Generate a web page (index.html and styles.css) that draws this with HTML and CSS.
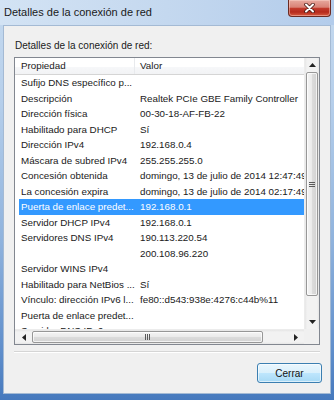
FILE: index.html
```html
<!DOCTYPE html>
<html lang="es">
<head>
<meta charset="utf-8">
<title>Detalles de la conexión de red</title>
<link rel="stylesheet" href="styles.css">
</head>
<body>
<div class="window">
  <div class="titlebar">
    <span class="title">Detalles de la conexión de red</span>
    <div class="close">
      <svg width="11" height="10" viewBox="0 0 11 10">
        <path d="M2 1.5 L9 8.5 M9 1.5 L2 8.5" stroke="#4a1a14" stroke-width="3.6" stroke-linecap="round"/>
        <path d="M2 1.5 L9 8.5 M9 1.5 L2 8.5" stroke="#ffffff" stroke-width="2" stroke-linecap="round"/>
      </svg>
    </div>
  </div>
  <div class="client">
    <div class="caption">Detalles de la conexión de red:</div>
    <div class="listbox">
      <div class="viewport">
        <div class="header">
          <div class="hcell h1">Propiedad</div>
          <div class="hcell h2">Valor</div>
        </div>
        <div class="rows">
          <div class="row"><span class="c1">Sufijo DNS específico p...</span><span class="c2"></span></div>
          <div class="row"><span class="c1">Descripción</span><span class="c2">Realtek PCIe GBE Family Controller</span></div>
          <div class="row"><span class="c1">Dirección física</span><span class="c2">00-30-18-AF-FB-22</span></div>
          <div class="row"><span class="c1">Habilitado para DHCP</span><span class="c2">Sí</span></div>
          <div class="row"><span class="c1">Dirección IPv4</span><span class="c2">192.168.0.4</span></div>
          <div class="row"><span class="c1">Máscara de subred IPv4</span><span class="c2">255.255.255.0</span></div>
          <div class="row"><span class="c1">Concesión obtenida</span><span class="c2">domingo, 13 de julio de 2014 12:47:49</span></div>
          <div class="row"><span class="c1">La concesión expira</span><span class="c2">domingo, 13 de julio de 2014 02:17:49</span></div>
          <div class="row selected"><span class="c1">Puerta de enlace predet...</span><span class="c2">192.168.0.1</span></div>
          <div class="row"><span class="c1">Servidor DHCP IPv4</span><span class="c2">192.168.0.1</span></div>
          <div class="row"><span class="c1">Servidores DNS IPv4</span><span class="c2">190.113.220.54</span></div>
          <div class="row"><span class="c1"></span><span class="c2">200.108.96.220</span></div>
          <div class="row"><span class="c1">Servidor WINS IPv4</span><span class="c2"></span></div>
          <div class="row"><span class="c1">Habilitado para NetBios ...</span><span class="c2">Sí</span></div>
          <div class="row"><span class="c1">Vínculo: dirección IPv6 l...</span><span class="c2">fe80::d543:938e:4276:c44b%11</span></div>
          <div class="row"><span class="c1">Puerta de enlace predet...</span><span class="c2"></span></div>
          <div class="row"><span class="c1">Servidor DNS IPv6</span><span class="c2"></span></div>
        </div>
      </div>
      <div class="vscroll">
        <div class="vbtn up"><svg width="7" height="4" viewBox="0 0 7 4"><path d="M0 4 L3.5 0 L7 4 Z" fill="#222"/></svg></div>
        <div class="vtrack"><div class="vthumb"><span class="grip-v"></span></div></div>
        <div class="vbtn down"><svg width="7" height="4" viewBox="0 0 7 4"><path d="M0 0 L3.5 4 L7 0 Z" fill="#222"/></svg></div>
      </div>
      <div class="hscroll">
        <div class="hbtn left"><svg width="4" height="7" viewBox="0 0 4 7"><path d="M4 0 L0 3.5 L4 7 Z" fill="#222"/></svg></div>
        <div class="hthumb"><span class="grip-h"></span></div>
        <div class="htrack"></div>
        <div class="hbtn right"><svg width="4" height="7" viewBox="0 0 4 7"><path d="M0 0 L4 3.5 L0 7 Z" fill="#222"/></svg></div>
      </div>
      <div class="corner"></div>
    </div>
    <div class="sep"></div>
    <div class="actions">
      <button class="btn">Cerrar</button>
    </div>
  </div>
</div>
</body>
</html>
```

FILE: styles.css
```css
* { box-sizing: border-box; }
html, body { margin: 0; padding: 0; }
body {
  width: 334px;
  height: 400px;
  overflow: hidden;
  font-family: "Liberation Sans", Arial, sans-serif;
  color: #1a1a1a;
}
.window {
  width: 334px;
  height: 400px;
  display: flex;
  flex-direction: column;
  background: linear-gradient(180deg, #c6daef 0%, #b6cfeb 25%, #90b3dd 60%, #5f8ecb 88%, #4679bd 100%);
}
.titlebar {
  height: 25px;
  flex: none;
  display: flex;
  justify-content: space-between;
  align-items: flex-start;
  background: linear-gradient(90deg, #d3e3f4 0%, #c4d8ef 50%, #b3cceb 100%);
}
.title {
  font-size: 11px;
  line-height: 14px;
  padding: 5px 0 0 4px;
  color: #1a1a1a;
}
.close {
  width: 43px;
  height: 17px;
  margin-right: 3px;
  border: 1px solid #6b2a22;
  border-top: none;
  border-radius: 0 0 4px 4px;
  background: linear-gradient(180deg, #e7a99f 0%, #d98276 45%, #c23a2c 52%, #b52a1c 75%, #d8593f 100%);
  box-shadow: inset 0 0 0 1px rgba(255, 220, 210, 0.45);
  display: flex;
  align-items: center;
  justify-content: center;
}
.client {
  flex: 1;
  margin: 0 3px 6px;
  background: #f0f0f0;
  border: 1px solid #a4bad4;
  padding: 13px 10px 0;
  display: flex;
  flex-direction: column;
}
.caption {
  font-size: 10px;
  line-height: 13px;
  margin-bottom: 5px;
  padding-left: 1px;
}
.listbox {
  height: 288px;
  border: 1px solid #828790;
  background: #fff;
  display: grid;
  grid-template-columns: 289px 15px;
  grid-template-rows: 271px 15px;
}
.viewport {
  overflow: hidden;
  font-size: 9.8px;
}
.header {
  height: 17px;
  display: flex;
  align-items: center;
  background: linear-gradient(180deg, #ffffff 0%, #ffffff 55%, #f6f7f9 56%, #f2f3f5 100%);
  border-bottom: 1px solid #d5d5d5;
}
.hcell {
  height: 16px;
  line-height: 15px;
  white-space: nowrap;
}
.h1 {
  width: 120px;
  padding-left: 6px;
  border-right: 1px solid #e8eaed;
}
.h2 {
  padding-left: 5px;
}
.rows {
  margin-left: 4px;
}
.row {
  height: 15.5px;
  line-height: 15.5px;
  display: flex;
  white-space: nowrap;
}
.row.selected {
  background: #3399ff;
  color: #fff;
}
.c1 {
  flex: none;
  width: 121px;
  padding-left: 2px;
}
.c2 {
  flex: none;
}
.vscroll {
  display: flex;
  flex-direction: column;
  background: linear-gradient(90deg, #e6e6e6 0%, #f2f2f2 15%, #f2f2f2 85%, #e6e6e6 100%);
  border-left: 1px solid #ececec;
}
.vbtn {
  display: flex;
  align-items: center;
  justify-content: center;
  flex: none;
}
.vbtn.up { height: 14px; }
.vbtn.down { height: 15px; }
.vtrack {
  flex: 1;
  padding: 0 1px;
}
.vthumb {
  height: 224px;
  border: 1px solid #979797;
  border-radius: 2px;
  background: linear-gradient(90deg, #f4f4f4 0%, #eaeaea 50%, #dcdcdc 51%, #d2d2d2 100%);
  box-shadow: inset 0 0 0 1px rgba(255, 255, 255, 0.7);
  display: flex;
  align-items: center;
  justify-content: center;
}
.grip-v {
  width: 6px;
  height: 5px;
  border-top: 1px solid #5a5a5a;
  border-bottom: 1px solid #5a5a5a;
  background: linear-gradient(180deg, transparent 1px, #5a5a5a 1px, #5a5a5a 2px, transparent 2px);
}
.hscroll {
  display: flex;
  align-items: stretch;
  background: linear-gradient(180deg, #e6e6e6 0%, #f2f2f2 15%, #f2f2f2 85%, #e6e6e6 100%);
  border-top: 1px solid #ececec;
}
.hbtn {
  display: flex;
  align-items: center;
  justify-content: center;
  flex: none;
}
.hbtn.left { width: 17px; }
.hbtn.right { width: 16px; }
.hthumb {
  width: 231px;
  flex: none;
  margin: 1px 0;
  border: 1px solid #979797;
  border-radius: 2px;
  background: linear-gradient(180deg, #f4f4f4 0%, #eaeaea 50%, #dcdcdc 51%, #d2d2d2 100%);
  box-shadow: inset 0 0 0 1px rgba(255, 255, 255, 0.7);
  display: flex;
  align-items: center;
  justify-content: center;
}
.grip-h {
  width: 5px;
  height: 6px;
  border-left: 1px solid #5a5a5a;
  border-right: 1px solid #5a5a5a;
  background: linear-gradient(90deg, transparent 1px, #5a5a5a 1px, #5a5a5a 2px, transparent 2px);
}
.htrack { flex: 1; }
.corner { background: #f0f0f0; }
.sep {
  margin-top: 6px;
  height: 2px;
  border-top: 1px solid #d5d5d5;
  border-bottom: 1px solid #ffffff;
}
.actions {
  display: flex;
  justify-content: flex-end;
  margin-top: 10px;
  margin-right: -2px;
}
.btn {
  width: 65px;
  height: 20px;
  padding: 0;
  border: 1px solid #3c7fb1;
  border-radius: 3px;
  background: linear-gradient(180deg, #eaf6fd 0%, #d9f0fc 50%, #bee6fd 51%, #a7d9f5 100%);
  box-shadow: inset 0 0 0 1px rgba(255, 255, 255, 0.6);
  font-family: "Liberation Sans", Arial, sans-serif;
  font-size: 10px;
  color: #111;
}
```
